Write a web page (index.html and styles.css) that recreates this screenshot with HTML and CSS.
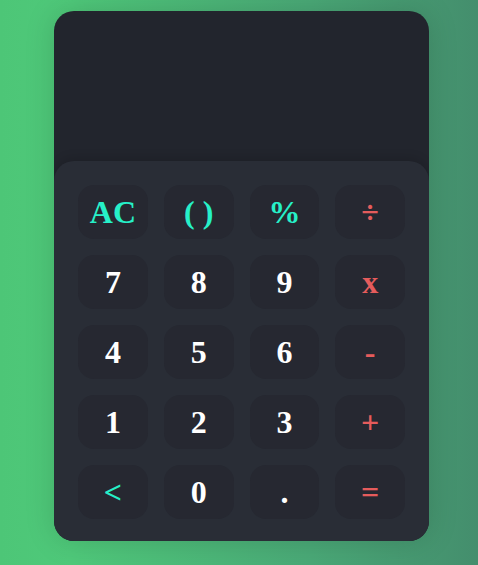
FILE: index.html
```html
<!DOCTYPE html>
<html>
<head>
<meta charset="utf-8">
<link rel="stylesheet" href="styles.css">
</head>
<body>
<div class="calc">
  <div class="display"></div>
  <div class="keys">
    <button class="key teal">AC</button>
    <button class="key teal">( )</button>
    <button class="key teal">%</button>
    <button class="key red">÷</button>
    <button class="key">7</button>
    <button class="key">8</button>
    <button class="key">9</button>
    <button class="key red">x</button>
    <button class="key">4</button>
    <button class="key">5</button>
    <button class="key">6</button>
    <button class="key red">-</button>
    <button class="key">1</button>
    <button class="key">2</button>
    <button class="key">3</button>
    <button class="key red">+</button>
    <button class="key teal">&lt;</button>
    <button class="key">0</button>
    <button class="key">.</button>
    <button class="key red">=</button>
  </div>
</div>
</body>
</html>
```
FILE: styles.css
```css
html, body {
  margin: 0;
  height: 100%;
}
body {
  background: linear-gradient(to right, #4dc677, #4fc97a 15%, #4aa977 65%, #448e6d);
  padding: 11px 0 0 54px;
  box-sizing: border-box;
  font-family: "Liberation Serif", "Times New Roman", serif;
}
.calc {
  width: 375px;
  height: 530px;
  background: #22252d;
  border-radius: 20px;
  overflow: hidden;
  display: flex;
  flex-direction: column;
  box-shadow: 0 0 30px rgba(0, 0, 0, 0.15);
}
.display {
  height: 150px;
  flex: none;
}
.keys {
  flex: 1;
  background: #292d36;
  border-radius: 20px 20px 0 0;
  padding: 24px 24px 21px;
  display: grid;
  grid-template-columns: repeat(4, 1fr);
  grid-auto-rows: 54px;
  column-gap: 16px;
  row-gap: 16px;
  box-shadow: 0 -4px 10px rgba(0, 0, 0, 0.12);
}
.key {
  border: none;
  background: #262831;
  border-radius: 16px;
  color: #ffffff;
  font-family: "Liberation Serif", "Times New Roman", serif;
  font-weight: bold;
  font-size: 32px;
  padding: 0;
  margin: 0;
}
.teal { color: #26f0c8; }
.red { color: #e55c5c; }
```
